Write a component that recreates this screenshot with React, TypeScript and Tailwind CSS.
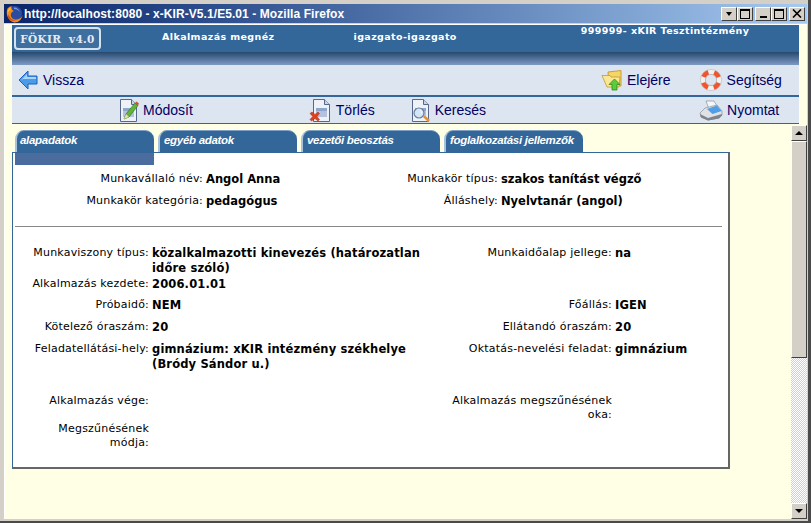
import React from 'react';

const Firefox = () => (
  <svg width="18" height="18" viewBox="0 0 18 18" className="shrink-0">
    <circle cx="9.500" cy="8.500" r="7.500" fill="#2b4c9e" />
    <path d="M9 2.500c3 0 5.500 2 6 5-1-2-3-3.500-6-3.500z" fill="#6f9be0" />
    <path d="M2.500 3.500C.5 8 2.500 16.500 9.500 17.500c4.500 0 7.500-3.500 8-7.500-1 2.800-3.500 4.500-6.500 4.500C8 14.500 5.800 12.500 5.800 10c0-2 1.200-3.300 3-4C7 5 6 3.500 6.500 1 5 1.500 3.500 2.500 2.500 3.500z" fill="#f08a1a" />
    <path d="M3 12c2 3.500 5 4.500 8.500 3.500-3.500 0-6.500-1.500-8-6z" fill="#d2470f" />
    <path d="M3.500 4c-.8 1.500-1 3-.8 4.500C3.500 6.500 4.500 5 6 4.500 5.500 3.500 5 3 5.500 2z" fill="#fbc23c" />
  </svg>
);

const WinBtn = ({ children, className = '' }: { children: React.ReactNode; className?: string }) => (
  <div className={`w-[16px] h-[14px] bg-[#d4d0c8] border border-t-white border-l-white border-r-[#404040] border-b-[#404040] flex items-center justify-center ${className}`}>
    {children}
  </div>
);

const BackIcon = () => (
  <svg width="20" height="20" viewBox="0 0 20 20" className="shrink-0">
    <path d="M1 10 10 1v5h9v8h-9v5z" fill="#4a9be8" stroke="#1c5fc0" strokeWidth="1" />
    <path d="M3 10 9 4v3h9v2H5z" fill="#a8d6fa" />
  </svg>
);

const Doc = () => (
  <>
    <path d="M1.500.5h11l5 5v17h-16z" fill="#eef2f8" stroke="#56688c" />
    <path d="M12.500.5v5h5" fill="#c9d4e8" stroke="#56688c" />
    <rect x="4" y="9" width="11" height="9" fill="#b3c3df" />
    <rect x="4" y="9" width="11" height="3" fill="#8ea5cc" />
  </>
);

const EditIcon = () => (
  <svg width="20" height="23" viewBox="0 0 20 23" className="shrink-0">
    <Doc />
    <path d="M5 20 7 15 16 4l3 2.500L10 18z" fill="#62b53a" stroke="#2f7d1e" strokeWidth=".7" />
    <path d="M16 4l1.500-1.500 2.500 2-1 2z" fill="#e04a33" />
    <path d="M5 20 7 15l3 3z" fill="#f3d9a8" />
  </svg>
);

const DeleteIcon = () => (
  <svg width="21" height="23" viewBox="0 0 21 23" className="shrink-0">
    <g transform="translate(3 0)"><Doc /></g>
    <path d="M1 14.500 3 13l3 2.500L9 13l1.500 1.500L8 17.500l2.500 3L9 22l-3-2.500L2.500 22 1 20.500l2.800-3z" fill="#e2401f" stroke="#a52a10" strokeWidth=".5" />
  </svg>
);

const SearchIcon = () => (
  <svg width="20" height="23" viewBox="0 0 20 23" className="shrink-0">
    <Doc />
    <circle cx="8" cy="14" r="5" fill="#d3e6f7" stroke="#6b7f99" strokeWidth="1.200" />
    <path d="M9.500 11.500a3 3 0 0 1 1 3" stroke="#fff" fill="none" />
    <path d="m12 18 2-1.500 5 4.500-2 2z" fill="#e8912d" />
  </svg>
);

const FolderIcon = () => (
  <svg width="22" height="22" viewBox="0 0 22 22" className="shrink-0">
    <path d="M7 3l13-1.500V17H8z" fill="#f6d566" stroke="#b8902a" strokeWidth=".8" />
    <path d="M1 6.500h8l1 1.500h9l-1 10H6z" fill="#fbe694" stroke="#c29a2e" strokeWidth=".8" />
    <path d="M13.500 10 19 15.500h-3V21h-5v-5.500H8z" fill="#5ccb3c" stroke="#2f8a1d" strokeWidth=".8" />
  </svg>
);

const HelpIcon = () => (
  <svg width="22" height="22" viewBox="0 0 22 22" className="shrink-0">
    <circle cx="11" cy="11" r="8.200" fill="none" stroke="#f1f1f1" strokeWidth="4.800" />
    <circle cx="11" cy="11" r="8.200" fill="none" stroke="#f2542b" strokeWidth="4.800" strokeDasharray="7 5.880" strokeDashoffset="3.500" transform="rotate(-45 11 11)" />
    <circle cx="11" cy="11" r="5.600" fill="none" stroke="#9a9a9a" strokeWidth=".6" />
    <circle cx="11" cy="11" r="10.600" fill="none" stroke="#b9b9b9" strokeWidth=".6" />
  </svg>
);

const PrintIcon = () => (
  <svg width="24" height="21" viewBox="0 0 24 21" className="shrink-0">
    <path d="M7 1h8l3 5-8 3z" fill="#f5f6f8" stroke="#8b8f99" strokeWidth=".7" />
    <path d="M1 13 6 8l12-3 5 6v4l-3 3-11 2-7-3z" fill="#dfe1e5" stroke="#8b8f99" strokeWidth=".7" />
    <path d="M8 9l10-3.500 4.500 5.500-9 3z" fill="#4f9ee6" />
    <path d="M1 14l8 4 14-4v1.500l-3 3-11 2-7-3z" fill="#7f838c" />
  </svg>
);

const Tab = ({ label, active }: { label: string; active?: boolean }) => (
  <div className={`w-[139px] h-[22px] rounded-t-[9px] bg-[#336699] border-l-2 border-t border-l-[#a9c2dc] border-t-[#7fa0c4] pt-[2px] text-white font-bold italic text-[11.500px] leading-[15px] tracking-[-0.3px] whitespace-nowrap font-['Liberation_Sans',sans-serif] ${active ? 'pl-[3px]' : 'pl-[4px]'}`}>
    {label}
  </div>
);

const Label = ({ children }: { children: React.ReactNode }) => (
  <div className="text-right text-[11px] leading-[14px] tracking-[0.2px] text-black">{children}</div>
);

const Value = ({ children }: { children?: React.ReactNode }) => (
  <div className="font-bold text-[11.500px] leading-[15px] text-black">{children}</div>
);

const NavItem = ({ icon, text, className = '' }: { icon: React.ReactNode; text: string; className?: string }) => (
  <div className={`flex items-center gap-[4px] text-[14px] text-[#000066] font-['Liberation_Sans',sans-serif] ${className}`}>
    {icon}
    <span>{text}</span>
  </div>
);

export default function App() {
  return (
    <div className="w-screen h-screen overflow-hidden flex flex-col bg-[#d4d0c8] border-r-[3px] border-b-2 border-r-[#4a4a4a] border-b-[#4a4a4a] font-['DejaVu_Sans',sans-serif]">
      {/* title bar */}
      <div className="ml-[4px] mr-px mt-[4px] h-[19px] shrink-0 flex items-center bg-gradient-to-r from-[#0a246a] to-[#a6caf0] pl-[1px] pr-[2px]">
        <Firefox />
        <span className="ml-[1px] text-white font-bold text-[12px] font-['Liberation_Sans',sans-serif] tracking-[0.07px] whitespace-nowrap">
          http://localhost:8080 - x-KIR-V5.1/E5.01 - Mozilla Firefox
        </span>
        <div className="ml-auto flex items-center">
          <WinBtn className="w-[11px]">
            <span className="w-0 h-0 border-x-[3px] border-x-transparent border-t-[4px] border-t-black" />
          </WinBtn>
          <WinBtn><span className="block w-[10px] h-[10px] border border-black border-t-2" /></WinBtn>
          <WinBtn className="ml-[2px]"><span className="block w-[7px] h-[2px] bg-black mt-[7px]" /></WinBtn>
          <WinBtn><span className="block w-[10px] h-[10px] border border-black border-t-2" /></WinBtn>
          <WinBtn className="ml-[2px]">
            <svg width="10" height="9" viewBox="0 0 10 9"><path d="M1 0.500 9 8.500M9 0.500 1 8.500" stroke="#000" strokeWidth="1.600" /></svg>
          </WinBtn>
        </div>
      </div>

      {/* page */}
      <div className="flex-1 min-h-0 ml-[4px] mr-px mt-[1px] mb-[2px] border-t border-l border-white bg-[#ffffe6] flex flex-col">
        <div className="shrink-0 pl-[7px] pr-[8px]">
          <div className="h-[27px] bg-[#336699] flex items-start text-white font-bold text-[9.500px] leading-[12px] tracking-[0.4px]">
            <div className="ml-[2px] mt-[2px] w-[87px] h-[23px] shrink-0 rounded-[4px] border-2 border-[#d7e2ef] flex items-center justify-center bg-[#3f6f9f] text-[#e4ebf3] text-[10.500px] font-['DejaVu_Serif',serif] tracking-[0.3px] whitespace-pre">
              FÖKIR  v4.0
            </div>
            <span className="ml-[61px] mt-[6px] whitespace-nowrap">Alkalmazás megnéz</span>
            <span className="ml-[79px] mt-[6px] whitespace-nowrap">igazgato-igazgato</span>
            <span className="ml-[124px] mt-0 whitespace-nowrap">999999- xKIR Tesztintézmény</span>
          </div>
          <div className="h-[13px] bg-gradient-to-b from-[#27496f] to-[#7e9bc4]" />
          <div className="h-[30px] bg-[#dde5f0] flex items-center">
            <NavItem icon={<BackIcon />} text="Vissza" className="ml-[6px] gap-[5px]" />
            <NavItem icon={<FolderIcon />} text="Elejére" className="ml-[517px]" />
            <NavItem icon={<HelpIcon />} text="Segítség" className="ml-[29px] gap-[5px]" />
          </div>
          <div className="h-[2px] bg-[#336699]" />
          <div className="h-[26px] bg-[#dde5f0] flex items-center">
            <NavItem icon={<EditIcon />} text="Módosít" className="ml-[107px]" />
            <NavItem icon={<DeleteIcon />} text="Törlés" className="ml-[116px] gap-[6px]" />
            <NavItem icon={<SearchIcon />} text="Keresés" className="ml-[36px]" />
            <NavItem icon={<PrintIcon />} text="Nyomtat" className="ml-[213px]" />
          </div>
          <div className="h-px bg-[#336699]" />
        </div>

        <div className="flex-1 min-h-0 flex">
          <div className="flex-1 min-w-0 pl-[7px] pt-[6px]">
            {/* tabs */}
            <div className="flex gap-[4px] pl-[3px]">
              <Tab label="alapadatok" active />
              <Tab label="egyéb adatok" />
              <Tab label="vezetői beosztás" />
              <Tab label="foglalkozatási jellemzők" />
            </div>
            {/* panel */}
            <div className="w-[718px] h-[317px] bg-white border border-[#336699] border-r-2 border-b-2 border-r-[#666666] border-b-[#666666]">
              <div className="ml-[2px] w-[139px] h-[12px] bg-[#4a6c9e]" />
              <div className="grid grid-cols-[190px_181px_108px_1fr] gap-x-[3px] auto-rows-[22px] pt-[7px]">
                <Label>Munkavállaló név:</Label><Value>Angol Anna</Value>
                <Label>Munkakör típus:</Label><Value>szakos tanítást végző</Value>
                <Label>Munkakör kategória:</Label><Value>pedagógus</Value>
                <Label>Álláshely:</Label><Value>Nyelvtanár (angol)</Value>
              </div>
              <div className="ml-[2px] mr-[6px] mt-[10px] h-px bg-[#888888]" />
              <div className="grid grid-cols-[120px_294px_163px_1fr] gap-x-[3px] pl-[16px] pt-[19px] tracking-[0.15px]">
                <div className="min-h-[31px]"><Label>Munkaviszony típus:</Label></div>
                <Value>közalkalmazotti kinevezés (határozatlan időre szóló)</Value>
                <Label>Munkaidőalap jellege:</Label><Value>na</Value>
                <div className="min-h-[21px]"><Label>Alkalmazás kezdete:</Label></div>
                <Value>2006.01.01</Value><div /><div />
                <div className="min-h-[22px]"><Label>Próbaidő:</Label></div>
                <Value>NEM</Value><Label>Főállás:</Label><Value>IGEN</Value>
                <div className="min-h-[22px]"><Label>Kötelező óraszám:</Label></div>
                <Value>20</Value><Label>Ellátandó óraszám:</Label><Value>20</Value>
                <div className="min-h-[52px]"><Label>Feladatellátási-hely:</Label></div>
                <Value>gimnázium: xKIR intézmény székhelye (Bródy Sándor u.)</Value>
                <Label>Oktatás-nevelési feladat:</Label><Value>gimnázium</Value>
                <div className="min-h-[28px]"><Label>Alkalmazás vége:</Label></div>
                <Value /><Label>Alkalmazás megszűnésének oka:</Label><Value />
                <Label>Megszűnésének módja:</Label><Value /><div /><div />
              </div>
            </div>
          </div>

          {/* scrollbar */}
          <div className="w-[16px] shrink-0 mt-px flex flex-col bg-[repeating-conic-gradient(#d4d0c8_0_25%,#ffffff_0_50%)] bg-[length:2px_2px]">
            <div className="h-[16px] bg-[#d4d0c8] border border-t-white border-l-white border-r-[#404040] border-b-[#404040] flex items-center justify-center">
              <span className="w-0 h-0 border-x-[4px] border-x-transparent border-b-[4px] border-b-black" />
            </div>
            <div className="h-[217px] bg-[#d4d0c8] border border-t-white border-l-white border-r-[#404040] border-b-[#404040]" />
            <div className="flex-1" />
            <div className="h-[16px] bg-[#d4d0c8] border border-t-white border-l-white border-r-[#404040] border-b-[#404040] flex items-center justify-center">
              <span className="w-0 h-0 border-x-[4px] border-x-transparent border-t-[4px] border-t-black" />
            </div>
          </div>
        </div>
      </div>
    </div>
  );
}
